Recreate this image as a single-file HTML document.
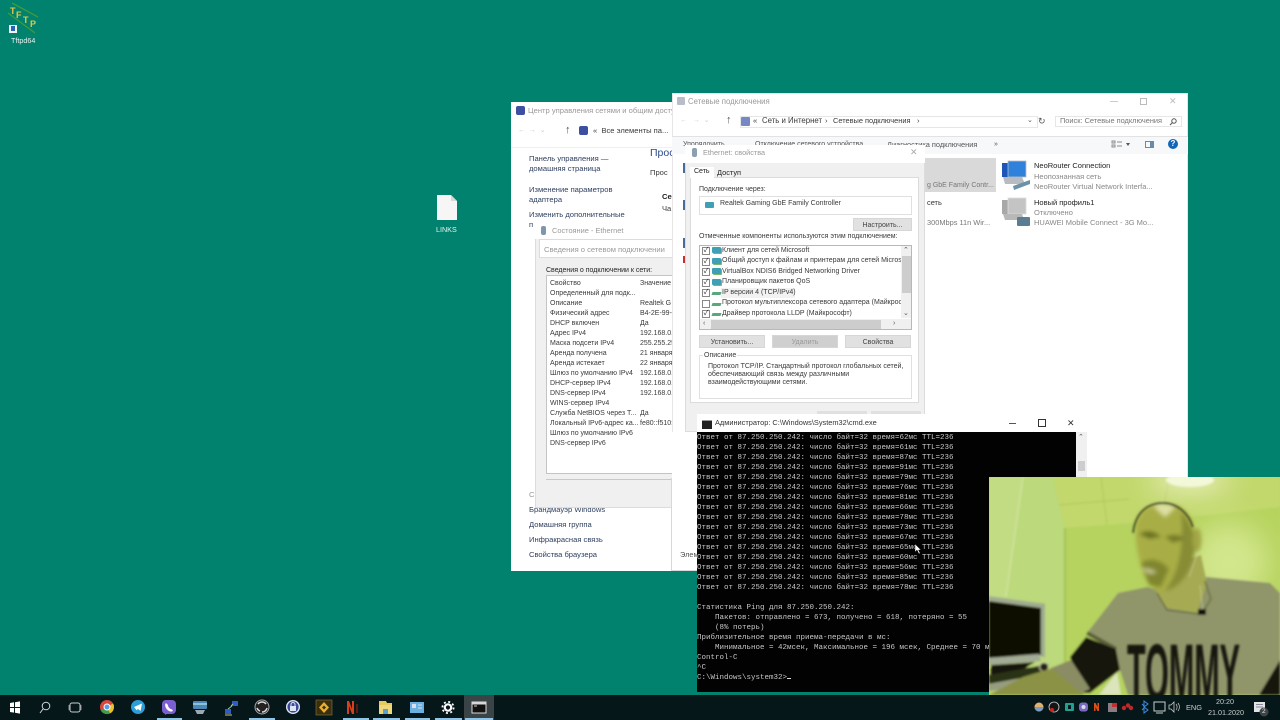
<!DOCTYPE html>
<html lang="ru"><head><meta charset="utf-8"><title>Desktop</title>
<style>
html,body{margin:0;padding:0;width:1280px;height:720px;overflow:hidden;background:#00826f}
body{font-family:"Liberation Sans","Noto Sans CJK SC",sans-serif;position:relative}
#w{position:absolute;left:0;top:0;width:1280px;height:720px;overflow:hidden;background:#00826f;filter:blur(.3px)}
.a,.t{position:absolute}
.t{white-space:nowrap;font-size:7px;line-height:10px;color:#3a3a3a;margin-top:1px}
.g{color:#8a8a8a}.l{color:#2f3f5f;font-size:7.6px}
.clip{overflow:hidden}
pre{margin:0;font-family:"Liberation Mono",monospace;font-size:7.5px;line-height:10px;color:#c8c8c8;position:absolute;left:697px;white-space:pre}
svg{position:absolute;overflow:visible}
.btn{position:absolute;background:#e1e1e1;border:1px solid #d6d6d6;box-sizing:border-box;text-align:center;font-size:7px;color:#444;line-height:13px}
.cb{position:absolute;left:702px;width:6px;height:6px;border:1px solid #888;background:#fff;color:#222;font-size:7px;line-height:6px;text-align:center}
.ni{position:absolute;left:712px;width:9px;height:6px;background:#3f9fb5;border-radius:1px;box-shadow:1px 1px 0 #79b86c}
.ng{position:absolute;left:712px;width:9px;height:3px;background:#5aa77e;margin-top:3px;transform:skewX(-20deg)}
.ul{position:absolute;top:718px;height:2px;background:#8fc6e8}
</style></head><body><div id="w">

<!-- desktop icons -->
<svg style="left:0;top:0" width="45" height="40" viewBox="0 0 45 40">
<path d="M12 3L38 17M8 13L35 33" stroke="#3f9a3a" stroke-width="1.4" fill="none"/>
</svg>
<div class="t" style="left:10px;top:5px;font-size:9px;font-weight:bold;color:#e5c743">T</div>
<div class="t" style="left:16px;top:9px;font-size:9px;font-weight:bold;color:#e5c743">F</div>
<div class="t" style="left:23px;top:14px;font-size:9px;font-weight:bold;color:#e5c743">T</div>
<div class="t" style="left:30px;top:18px;font-size:9px;font-weight:bold;color:#e5c743">P</div>
<div class="a" style="left:9px;top:25px;width:8px;height:8px;background:#f2f2f2"><div class="a" style="left:2px;top:1px;width:4px;height:5px;background:#2a62b4"></div></div>
<div class="t" style="left:11px;top:35px;color:#e8f2f0;font-size:7.2px">Tftpd64</div>
<svg style="left:437px;top:195px" width="20" height="25" viewBox="0 0 20 25"><path d="M0 0H14L20 6V25H0Z" fill="#f6f6f6"/><path d="M14 0V6H20" fill="#d8d8d8"/></svg>
<div class="t" style="left:436px;top:224px;color:#e8f2f0;font-size:7.2px">LINKS</div>

<!-- network centre window -->
<div class="a clip" style="left:511px;top:102px;width:170px;height:469px;background:#fff">
<div class="a" style="left:0;top:45px;width:170px;height:1px;background:#f0f0f0"></div>
</div>
<div class="a" style="left:516px;top:106px;width:9px;height:9px;background:#3d4fa0;border-radius:2px"></div>
<div class="t g" style="left:528px;top:105px;font-size:7.6px;color:#999">Центр управления сетями и общим досту</div>
<div class="t g" style="left:518px;top:125px;color:#c8c8c8">←&nbsp;&nbsp;→&nbsp;&nbsp;⌄</div>
<div class="t" style="left:565px;top:124px;font-size:11px;color:#555">↑</div>
<div class="a" style="left:579px;top:126px;width:9px;height:9px;background:#3d4fa0;border-radius:2px"></div>
<div class="t" style="left:593px;top:125px;font-size:7.6px">«&nbsp;&nbsp;Все элементы па...</div>
<div class="t l" style="left:529px;top:153px">Панель управления —</div>
<div class="t l" style="left:529px;top:163px">домашняя страница</div>
<div class="t l" style="left:529px;top:184px">Изменение параметров</div>
<div class="t l" style="left:529px;top:194px">адаптера</div>
<div class="t l" style="left:529px;top:209px">Изменить дополнительные</div>
<div class="t l" style="left:529px;top:219px">п</div>
<div class="t" style="left:650px;top:146px;font-size:10.5px;line-height:12px;color:#2b4a8a">Прос</div>
<div class="t" style="left:650px;top:167px;font-size:7.6px">Прос</div>
<div class="t" style="left:662px;top:191px;font-weight:bold;color:#222;font-size:7.6px">Се</div>
<div class="t" style="left:662px;top:203px;font-size:7.6px">Ча</div>
<div class="t g" style="left:529px;top:489px;color:#999;font-size:7.6px">См</div>
<div class="t l" style="left:529px;top:504px">Брандмауэр Windows</div>
<div class="t l" style="left:529px;top:519px">Домашняя группа</div>
<div class="t l" style="left:529px;top:534px">Инфракрасная связь</div>
<div class="t l" style="left:529px;top:549px">Свойства браузера</div>

<!-- status window -->
<div class="a" style="left:535px;top:222px;width:140px;height:286px;background:#f0f0f0;border:1px solid #dcdcdc;box-sizing:border-box"></div>
<div class="a" style="left:535px;top:222px;width:140px;height:17px;background:#fff"></div>
<div class="a" style="left:541px;top:226px;width:5px;height:9px;background:#7f97ad;border-radius:2px"></div>
<div class="t g" style="left:552px;top:225px;color:#999;font-size:7.4px">Состояние - Ethernet</div>
<div class="a" style="left:539px;top:239px;width:136px;height:19px;background:#fff;border:1px solid #dcdcdc;box-sizing:border-box"></div>
<div class="t g" style="left:544px;top:244px;color:#999;font-size:7.6px">Сведения о сетевом подключении</div>
<div class="t" style="left:546px;top:265px;color:#222">Сведения о подключении к сети:</div>
<div class="a" style="left:546px;top:275px;width:128px;height:199px;background:#fff;border:1px solid #c4c4c4;box-sizing:border-box"></div>
<div class="t" style="left:550px;top:278px">Свойство</div><div class="t" style="left:640px;top:278px">Значение</div>
<div class="t" style="left:550px;top:288px">Определенный для подк...</div>
<div class="t" style="left:550px;top:298px">Описание</div><div class="t" style="left:640px;top:298px">Realtek G</div>
<div class="t" style="left:550px;top:308px">Физический адрес</div><div class="t" style="left:640px;top:308px">B4-2E-99-</div>
<div class="t" style="left:550px;top:318px">DHCP включен</div><div class="t" style="left:640px;top:318px">Да</div>
<div class="t" style="left:550px;top:328px">Адрес IPv4</div><div class="t" style="left:640px;top:328px">192.168.0.1</div>
<div class="t" style="left:550px;top:338px">Маска подсети IPv4</div><div class="t" style="left:640px;top:338px">255.255.25</div>
<div class="t" style="left:550px;top:348px">Аренда получена</div><div class="t" style="left:640px;top:348px">21 января</div>
<div class="t" style="left:550px;top:358px">Аренда истекает</div><div class="t" style="left:640px;top:358px">22 января</div>
<div class="t" style="left:550px;top:368px">Шлюз по умолчанию IPv4</div><div class="t" style="left:640px;top:368px">192.168.0.1</div>
<div class="t" style="left:550px;top:378px">DHCP-сервер IPv4</div><div class="t" style="left:640px;top:378px">192.168.0.1</div>
<div class="t" style="left:550px;top:388px">DNS-сервер IPv4</div><div class="t" style="left:640px;top:388px">192.168.0.1</div>
<div class="t" style="left:550px;top:398px">WINS-сервер IPv4</div>
<div class="t" style="left:550px;top:408px">Служба NetBIOS через Т...</div><div class="t" style="left:640px;top:408px">Да</div>
<div class="t" style="left:550px;top:418px">Локальный IPv6-адрес ка...</div><div class="t" style="left:640px;top:418px">fe80::f510:</div>
<div class="t" style="left:550px;top:428px">Шлюз по умолчанию IPv6</div>
<div class="t" style="left:550px;top:438px">DNS-сервер IPv6</div>
<div class="a" style="left:546px;top:479px;width:126px;height:1px;background:#c8c8c8"></div>

<!-- connections window -->
<div class="a" style="left:672px;top:93px;width:516px;height:385px;background:#fff;border:1px solid #e6e6e6;box-sizing:border-box"></div>
<div class="a" style="left:672px;top:136px;width:516px;height:18px;background:#f6f8fa;border-top:1px solid #e2e2e2;box-sizing:border-box"></div>
<div class="a" style="left:677px;top:97px;width:8px;height:8px;background:#b8bdc8;border-radius:1px"></div>
<div class="t g" style="left:688px;top:96px;font-size:7.8px;color:#999">Сетевые подключения</div>
<div class="a" style="left:1110px;top:101px;width:8px;height:1px;background:#ccc"></div>
<div class="a" style="left:1140px;top:98px;width:5px;height:5px;border:1px solid #bbb"></div>
<div class="t" style="left:1169px;top:95px;font-size:9px;color:#bbb">✕</div>
<div class="t" style="left:680px;top:115px;color:#d0d0d0">←&nbsp;&nbsp;&nbsp;→&nbsp;&nbsp;⌄</div>
<div class="t" style="left:726px;top:114px;font-size:11px;color:#555">↑</div>
<div class="a" style="left:740px;top:116px;width:298px;height:12px;border:1px solid #e6e6e6;box-sizing:border-box"></div>
<div class="a" style="left:741px;top:117px;width:9px;height:9px;background:#7688c4;border-radius:1px"></div>
<div class="t" style="left:753px;top:115px;font-size:7.6px">«</div>
<div class="t" style="left:762px;top:115px;font-size:7.8px">Сеть и Интернет</div>
<div class="t" style="left:825px;top:115px;font-size:7.6px">›</div>
<div class="t" style="left:833px;top:115px;font-size:7.4px">Сетевые подключения</div>
<div class="t" style="left:917px;top:115px;font-size:7.6px">›</div>
<div class="t" style="left:1027px;top:115px;color:#555">⌄</div>
<div class="t" style="left:1038px;top:115px;color:#555;font-size:9px">↻</div>
<div class="a" style="left:1055px;top:116px;width:127px;height:11px;border:1px solid #e6e6e6;box-sizing:border-box"></div>
<div class="t" style="left:1060px;top:115px;color:#777;font-size:7.4px">Поиск: Сетевые подключения</div>
<svg style="left:1169px;top:118px" width="8" height="8" viewBox="0 0 8 8"><circle cx="5" cy="3" r="2.2" fill="none" stroke="#555"/><path d="M3.4 4.6L1 7" stroke="#555"/></svg>
<div class="t" style="left:683px;top:139px;color:#555">Упорядочить</div>
<div class="t" style="left:755px;top:139px;color:#555">Отключение сетевого устройства</div>
<div class="t" style="left:887px;top:139px;color:#555;font-size:7.4px">Диагностика подключения</div>
<div class="t" style="left:994px;top:139px;color:#555">»</div>
<svg style="left:1111px;top:140px" width="30" height="9" viewBox="0 0 30 9"><path d="M1 1h3v2H1zM1 5h3v2H1zM6 2h5M6 6h5" stroke="#8a8a8a" fill="none"/><path d="M15 3h4l-2 3z" fill="#555"/></svg>
<div class="a" style="left:1145px;top:141px;width:9px;height:7px;border:1px solid #6a8aaa;box-sizing:border-box;border-right:4px solid #6a8aaa"></div>
<div class="a" style="left:1168px;top:139px;width:10px;height:10px;border-radius:50%;background:#1266b5;color:#fff;font-size:8px;line-height:10px;text-align:center;font-weight:bold">?</div>
<div class="a" style="left:683px;top:163px;width:2px;height:10px;background:#4a6a9a"></div>
<div class="a" style="left:683px;top:200px;width:2px;height:10px;background:#4a6a9a"></div>
<div class="a" style="left:683px;top:238px;width:2px;height:10px;background:#4a6a9a"></div>
<div class="a" style="left:683px;top:256px;width:2px;height:7px;background:#c83030"></div>
<div class="a" style="left:925px;top:158px;width:71px;height:34px;background:#d9d9d9"></div>
<div class="t" style="left:927px;top:180px;color:#777">g GbE Family Contr...</div>
<div class="t" style="left:927px;top:197px;color:#333;font-size:7.4px">сеть</div>
<div class="t" style="left:927px;top:217px;color:#777;font-size:7.4px">300Mbps 11n Wir...</div>
<svg style="left:1000px;top:159px" width="32" height="70" viewBox="0 0 32 70">
<rect x="2" y="4" width="14" height="14" fill="#1e56b8"/><rect x="8" y="2" width="18" height="16" fill="#2e82dc" stroke="#b8bec8" stroke-width=".8"/>
<path d="M3 18h19l3 7H5z" fill="#b8bcc0"/><path d="M13 27l17-6v4l-16 6z" fill="#6d92a8"/>
<rect x="2" y="41" width="14" height="14" fill="#a8a8a8"/><rect x="8" y="39" width="18" height="16" fill="#c4c4c4" stroke="#ddd" stroke-width=".8"/>
<path d="M3 55h19l2 6H5z" fill="#b8b8b8"/><rect x="17" y="58" width="13" height="9" rx="1" fill="#5c7c94"/>
</svg>
<div class="t" style="left:1034px;top:160px;color:#222;font-size:7.5px">NeoRouter Connection</div>
<div class="t" style="left:1034px;top:171px;color:#888;font-size:7.5px">Неопознанная сеть</div>
<div class="t" style="left:1034px;top:181px;color:#888;font-size:7.5px">NeoRouter Virtual Network Interfa...</div>
<div class="t" style="left:1034px;top:197px;color:#222;font-size:7.5px">Новый профиль1</div>
<div class="t" style="left:1034px;top:207px;color:#888;font-size:7.5px">Отключено</div>
<div class="t" style="left:1034px;top:217px;color:#888;font-size:7.5px">HUAWEI Mobile Connect - 3G Mo...</div>

<!-- properties dialog -->
<div class="a" style="left:685px;top:145px;width:240px;height:287px;background:#f0f0f0;border:1px solid #dcdcdc;box-sizing:border-box"></div>
<div class="a" style="left:685px;top:145px;width:240px;height:18px;background:#fff"></div>
<div class="a" style="left:692px;top:148px;width:5px;height:9px;background:#8ba0b2;border-radius:2px"></div>
<div class="t g" style="left:703px;top:147px;color:#999;font-size:7.3px">Ethernet: свойства</div>
<div class="t" style="left:910px;top:146px;color:#aaa;font-size:9px">✕</div>
<div class="a" style="left:690px;top:177px;width:229px;height:226px;background:#fff;border:1px solid #dcdcdc;box-sizing:border-box"></div>
<div class="a" style="left:690px;top:167px;width:24px;height:11px;background:#fff"></div>
<div class="t" style="left:694px;top:166px;color:#222">Сеть</div>
<div class="t" style="left:717px;top:167px;color:#222;font-size:7.4px">Доступ</div>
<div class="t" style="left:699px;top:184px">Подключение через:</div>
<div class="a" style="left:699px;top:196px;width:213px;height:19px;border:1px solid #e0e0e0;box-sizing:border-box"></div>
<div class="a" style="left:705px;top:202px;width:9px;height:6px;background:#3f9fb5;border-radius:1px"></div>
<div class="t" style="left:720px;top:198px">Realtek Gaming GbE Family Controller</div>
<div class="btn" style="left:853px;top:218px;width:59px;height:13px">Настроить...</div>
<div class="t" style="left:699px;top:231px">Отмеченные компоненты используются этим подключением:</div>
<div class="a" style="left:699px;top:245px;width:213px;height:85px;border:1px solid #b8b8b8;box-sizing:border-box;background:#fff"></div>
<div class="cb" style="top:247px">✓</div><div class="ni" style="top:247px"></div><div class="t" style="left:722px;top:245px">Клиент для сетей Microsoft</div>
<div class="cb" style="top:258px">✓</div><div class="ni" style="top:258px"></div><div class="t clip" style="left:722px;top:255px;width:179px">Общий доступ к файлам и принтерам для сетей Microsoft</div>
<div class="cb" style="top:268px">✓</div><div class="ni" style="top:268px"></div><div class="t" style="left:722px;top:266px">VirtualBox NDIS6 Bridged Networking Driver</div>
<div class="cb" style="top:279px">✓</div><div class="ni" style="top:279px"></div><div class="t" style="left:722px;top:276px">Планировщик пакетов QoS</div>
<div class="a" style="left:721px;top:288px;width:74px;height:10px;background:#f2f2f2"></div>
<div class="cb" style="top:289px">✓</div><div class="ng" style="top:289px"></div><div class="t" style="left:722px;top:287px">IP версии 4 (TCP/IPv4)</div>
<div class="cb" style="top:300px"></div><div class="ng" style="top:300px"></div><div class="t clip" style="left:722px;top:297px;width:179px">Протокол мультиплексора сетевого адаптера (Майкрософт)</div>
<div class="cb" style="top:310px">✓</div><div class="ng" style="top:310px"></div><div class="t" style="left:722px;top:308px">Драйвер протокола LLDP (Майкрософт)</div>
<div class="a" style="left:901px;top:246px;width:10px;height:72px;background:#f0f0f0"></div>
<div class="a" style="left:902px;top:256px;width:9px;height:37px;background:#cdcdcd"></div>
<div class="t" style="left:903px;top:245px;color:#555;font-size:7px">⌃</div>
<div class="t" style="left:903px;top:308px;color:#555;font-size:7px">⌄</div>
<div class="a" style="left:700px;top:319px;width:211px;height:10px;background:#f0f0f0"></div>
<div class="a" style="left:711px;top:320px;width:170px;height:9px;background:#cdcdcd"></div>
<div class="t" style="left:703px;top:318px;color:#555">‹</div><div class="t" style="left:893px;top:318px;color:#555">›</div>
<div class="btn" style="left:699px;top:335px;width:66px;height:13px">Установить...</div>
<div class="btn" style="left:772px;top:335px;width:66px;height:13px;background:#cfcfcf;color:#999">Удалить</div>
<div class="btn" style="left:845px;top:335px;width:66px;height:13px">Свойства</div>
<div class="a" style="left:699px;top:355px;width:213px;height:44px;border:1px solid #e0e0e0;box-sizing:border-box"></div>
<div class="t" style="left:703px;top:350px;background:#fff;padding:0 1px">Описание</div>
<div class="t" style="left:708px;top:361px">Протокол TCP/IP. Стандартный протокол глобальных сетей,</div>
<div class="t" style="left:708px;top:369px">обеспечивающий связь между различными</div>
<div class="t" style="left:708px;top:377px">взаимодействующими сетями.</div>
<div class="a" style="left:817px;top:411px;width:50px;height:4px;background:#e0e0e0"></div>
<div class="a" style="left:871px;top:411px;width:50px;height:4px;background:#e0e0e0"></div>
<div class="a" style="left:672px;top:432px;width:25px;height:139px;background:#fff"></div>
<div class="a" style="left:671px;top:478px;width:1px;height:93px;background:#d8d8d8"></div>
<div class="a" style="left:672px;top:570px;width:25px;height:1px;background:#d8d8d8"></div>
<div class="a" style="left:672px;top:478px;width:25px;height:92px;background:#fff"></div>
<div class="t" style="left:680px;top:549px;color:#555;font-size:7.4px">Элем</div>

<!-- cmd window -->
<div class="a" style="left:697px;top:414px;width:390px;height:18px;background:#fff"></div>
<div class="a" style="left:702px;top:420px;width:10px;height:8px;background:#222;border-top:1px solid #999"></div>
<div class="t" style="left:715px;top:417px;color:#333;font-size:7.4px">Администратор: C:\Windows\System32\cmd.exe</div>
<div class="a" style="left:1009px;top:423px;width:7px;height:1px;background:#555"></div>
<div class="a" style="left:1038px;top:419px;width:6px;height:6px;border:1px solid #333"></div>
<div class="t" style="left:1067px;top:417px;color:#333;font-size:9px">✕</div>
<div class="a" style="left:697px;top:432px;width:379px;height:260px;background:#020202"></div>
<div class="a" style="left:1076px;top:432px;width:11px;height:45px;background:#f0f0f0"></div>
<div class="a" style="left:1078px;top:461px;width:7px;height:10px;background:#cdcdcd"></div>
<div class="t" style="left:1078px;top:432px;color:#555;font-size:7px">⌃</div>
<pre style="top:433px">Ответ от 87.250.250.242: число байт=32 время=62мс TTL=236
Ответ от 87.250.250.242: число байт=32 время=61мс TTL=236
Ответ от 87.250.250.242: число байт=32 время=87мс TTL=236
Ответ от 87.250.250.242: число байт=32 время=91мс TTL=236
Ответ от 87.250.250.242: число байт=32 время=79мс TTL=236
Ответ от 87.250.250.242: число байт=32 время=76мс TTL=236
Ответ от 87.250.250.242: число байт=32 время=81мс TTL=236
Ответ от 87.250.250.242: число байт=32 время=66мс TTL=236
Ответ от 87.250.250.242: число байт=32 время=78мс TTL=236
Ответ от 87.250.250.242: число байт=32 время=73мс TTL=236
Ответ от 87.250.250.242: число байт=32 время=67мс TTL=236
Ответ от 87.250.250.242: число байт=32 время=65мс TTL=236
Ответ от 87.250.250.242: число байт=32 время=60мс TTL=236
Ответ от 87.250.250.242: число байт=32 время=56мс TTL=236
Ответ от 87.250.250.242: число байт=32 время=85мс TTL=236
Ответ от 87.250.250.242: число байт=32 время=78мс TTL=236

Статистика Ping для 87.250.250.242:
    Пакетов: отправлено = 673, получено = 618, потеряно = 55
    (8% потерь)
Приблизительное время приема-передачи в мс:
    Минимальное = 42мсек, Максимальное = 196 мсек, Среднее = 70 м
Control-C
^C
C:\Windows\system32&gt;<span style="display:inline-block;width:4px;height:1px;background:#ddd"></span></pre>
<svg style="left:915px;top:544px" width="7" height="10" viewBox="0 0 7 10"><path d="M0 0V8L2 6L4 10L5 9L3.5 6H6Z" fill="#fff" stroke="#000" stroke-width=".4"/></svg>

<!-- webcam -->
<svg style="left:989px;top:477px;overflow:hidden" width="291" height="218" viewBox="0 0 291 218">
<defs><filter id="b" x="-5%" y="-5%" width="110%" height="110%"><feGaussianBlur stdDeviation="1"/></filter>
<filter id="b3" x="-20%" y="-20%" width="140%" height="140%"><feGaussianBlur stdDeviation="1.8"/></filter>
<filter id="b2" x="-80%" y="-80%" width="260%" height="260%"><feGaussianBlur stdDeviation="14"/></filter></defs>
<rect width="291" height="218" fill="#b9d566"/>
<g filter="url(#b)">
<path d="M0 0H64L76 51V190H0Z" fill="#bcd97c"/>
<path d="M0 0H34L17 120H0Z" fill="#c2dc84"/>
<path d="M34 0L17 120" stroke="#d8e8a8" stroke-width="1" fill="none"/>
<path d="M64 0H291V30L215 40L144 46L76 51Z" fill="#c2d86c"/>
<path d="M70 28L140 22M112 0L118 48M180 0L175 30" stroke="#a8c058" stroke-width=".7" fill="none"/>
<path d="M76 51L144 46L291 30V218H76Z" fill="#b6d35e"/>
<path d="M76 51V190" stroke="#a4c254" stroke-width="2"/>
<ellipse cx="240" cy="85" rx="40" ry="40" fill="#d2e68c" filter="url(#b2)"/>
<ellipse cx="201" cy="2" rx="40" ry="14" fill="#e8f0c0" filter="url(#b2)"/>
<ellipse cx="201" cy="3" rx="24" ry="7" fill="#f3f8d8"/>
<path d="M0 120L56 127L54 178L0 181Z" fill="#0a0a06"/>
<path d="M0 119L56 127L56 180H52V131L0 124Z" fill="#a0ac90"/>
<path d="M0 181L50 177L52 184L0 188Z" fill="#a3ac94"/>
<path d="M2 188L46 185L28 196L2 198Z" fill="#14140a"/>
<path d="M0 198L60 187L55 197L0 207Z" fill="#2c3018"/>
<path d="M0 207L40 200L36 210L0 214Z" fill="#969c80"/>
<circle cx="55" cy="190" r="4.500" fill="#20200f" stroke="#c8ccb0" stroke-width="1"/>
<path d="M98 156L129 116L158 110L178 115L218 100L281 106L291 116V218H139L131 193L127 172Z" fill="#90956a"/>
<path d="M270 218L291 183V218Z" fill="#15160c"/>
<path d="M98 156L127 172" stroke="#5c5e38" stroke-width="4" fill="none"/>
<path d="M81 180L97 160L127 172L131 193L101 216H95Z" fill="#15160c"/>
<path d="M0 218L34 200L64 191L91 206L95 218Z" fill="#8c9244"/>
<path d="M62 191L82 183L101 212L92 216Z" fill="#8a8c64"/>
<path d="M158 96L168 116L178 131L208 136L218 106L212 78Z" fill="#a6aa52"/>
<path d="M168 116L178 133L210 137" stroke="#6c7040" stroke-width="1.5" fill="none"/>
<path d="M216 104L222 122L212 138" stroke="#767a4c" stroke-width="2" fill="none"/>
<g filter="url(#b3)">
<path d="M147 48C150 30 168 25 182 27C198 29 206 44 206 66C206 88 194 110 174 114C163 114 156 104 153 92C148 76 146 62 147 48Z" fill="#a9ad45"/>
<path d="M192 35C200 44 206 55 206 68C206 88 194 110 176 114C186 100 196 80 192 35Z" fill="#878c34"/>
<path d="M152 86C160 80 172 82 180 92L172 110L160 108Z" fill="#80862f"/>
<path d="M152 92C158 90 164 92 168 96L160 97Z" fill="#c0c288"/>
<path d="M150 57C158 52 166 54 172 60L160 62Z" fill="#6c7220"/>
<path d="M176 60C184 56 192 58 196 62L184 66Z" fill="#747a28"/>
<path d="M165 30C170 26 180 26 186 31L176 40Z" fill="#dbe0a0"/>
<ellipse cx="208" cy="63" rx="4.500" ry="12" fill="#a2a644"/>
</g>
<path d="M144 56C146 36 158 26 174 26C188 26 200 36 204 50" fill="none" stroke="#1e2014" stroke-width="2"/>
<path d="M209 75L200 100M211 108L214 135" stroke="#d0d4a0" stroke-width=".6" fill="none"/>
<rect x="209" y="132" width="8" height="6" fill="#111"/>
<path d="M110 218L128 195L132 218Z" fill="#dce4bc"/>
</g>
<text x="138" y="224" font-family="Liberation Sans,sans-serif" font-size="82" font-weight="bold" fill="#15160c" textLength="113" lengthAdjust="spacingAndGlyphs" filter="url(#b)">TOMMY</text>
</svg>

<!-- taskbar -->
<div class="a" style="left:0;top:695px;width:1280px;height:25px;background:#06171a"></div>
<div class="a" style="left:464px;top:695px;width:30px;height:25px;background:#3a4446"></div>
<div class="ul" style="left:157px;width:25px"></div><div class="ul" style="left:249px;width:26px"></div><div class="ul" style="left:343px;width:26px"></div><div class="ul" style="left:373px;width:27px"></div><div class="ul" style="left:405px;width:25px"></div><div class="ul" style="left:435px;width:27px"></div><div class="ul" style="left:465px;width:28px"></div>
<svg style="left:0;top:695px" width="500" height="25" viewBox="0 0 500 25">
<path d="M10 8L14 7.3V12H10ZM15 7.2L20 6.4V12H15ZM10 13H14V17.6L10 17ZM15 13H20V18.6L15 17.8Z" fill="#fff"/>
<circle cx="46" cy="11" r="3.8" fill="none" stroke="#cfd4d4"/><path d="M43 14L40 18" stroke="#cfd4d4"/>
<rect x="70" y="8" width="10" height="9" rx="2" fill="none" stroke="#c8cccc"/><path d="M69 10v5M81 10v5" stroke="#888"/>
<circle cx="107" cy="12" r="7" fill="#d8473c"/><path d="M107 12L100.6 15A7 7 0 0 0 110 18.4Z" fill="#3aa04a"/><path d="M107 12L110 18.4A7 7 0 0 0 113 8.5Z" fill="#e8c22e"/><circle cx="107" cy="12" r="3" fill="#5a9be6" stroke="#fff"/>
<circle cx="138" cy="12" r="7" fill="#2c9fd8"/><path d="M134 12L142 8.5L140.6 16L138 14L136.6 15.2Z" fill="#fff"/>
<rect x="162" y="5" width="14" height="14" rx="4" fill="#7b5fd0"/><path d="M165.5 8.5C167 8 168 10 168 11C169 13 170 14 172 14.5C173 15 173 16 172 16.5C168 17 164 12 165.5 8.5Z" fill="#fff"/><path d="M165 20l3-2h-3z" fill="#7b5fd0"/>
<rect x="193" y="6" width="14" height="8" rx="1" fill="#4a86b8"/><path d="M193 9h14" stroke="#cfe" /><path d="M195 15h10l-2 4h-6z" fill="#9ca8b0"/>
<rect x="232" y="6" width="6" height="5" fill="#2e5cc8"/><rect x="225" y="14" width="6" height="5" fill="#2e5cc8"/><path d="M231 11L233 9M228 14L232 11" stroke="#9c9" /><path d="M225 20h7" stroke="#d0c060"/>
<circle cx="262" cy="12" r="7" fill="#222" stroke="#aaa"/><path d="M258 9A5 5 0 0 1 266 9M267 13A5 5 0 0 1 262 17M257 13A5 5 0 0 0 260 16" stroke="#ddd" fill="none" stroke-width="1.5"/>
<circle cx="293" cy="12" r="7" fill="#dfe4f4"/><circle cx="293" cy="12" r="5.6" fill="#3a4a9a"/><rect x="290" y="11" width="6" height="5" fill="#dfe4f4"/><path d="M291 11V9.5a2 2 0 0 1 4 0V11" fill="none" stroke="#dfe4f4"/>
<rect x="316" y="5" width="16" height="15" fill="#3b2f10" stroke="#8a7a3a" stroke-width=".6"/><path d="M324 7L329 12.5L324 18L319 12.5Z" fill="#e8b030"/><path d="M324 10.5L326 12.5L324 14.5L322 12.5Z" fill="#3b2f10"/>
<path d="M347 6h2l3 8V6h2v13h-2l-3-8v8h-2z" fill="#d8401c"/><path d="M356 9h2v9h-2z" fill="#5a1a10"/>
<path d="M379 6h7l1 2h5v11h-13z" fill="#e8c860"/><rect x="379" y="10" width="13" height="9" fill="#f0d878"/><rect x="383" y="14" width="5" height="5" fill="#5aa0d0"/>
<rect x="410" y="7" width="14" height="11" fill="#6ab0e0"/><rect x="412" y="9" width="4" height="4" fill="#dde"/><path d="M418 10h4M418 13h4" stroke="#dde"/>
<circle cx="448" cy="12.5" r="3.2" fill="none" stroke="#fff" stroke-width="2.2"/><circle cx="448" cy="12.5" r="5.6" fill="none" stroke="#fff" stroke-width="1.8" stroke-dasharray="2 2.4"/>
<rect x="472" y="7" width="14" height="11" fill="#111" stroke="#d8d8d8"/><path d="M472 8.5h14" stroke="#d8d8d8" stroke-width="2"/><path d="M474 11h3" stroke="#ccc"/>
</svg>
<svg style="left:1030px;top:695px" width="250" height="25" viewBox="0 0 250 25">
<circle cx="9" cy="12" r="4.5" fill="#e0b070"/><path d="M4.5 12a4.5 4.5 0 0 0 9 0z" fill="#7a9cc0"/>
<circle cx="24" cy="12" r="5" fill="#151515" stroke="#ccc" stroke-width=".8"/><circle cx="22" cy="15" r="2" fill="#d02020"/>
<rect x="35" y="8" width="9" height="8" rx="1" fill="#20a090"/><rect x="38" y="10" width="3" height="4" fill="#06171a"/>
<rect x="49" y="7.5" width="9" height="9" rx="3" fill="#7b6bc0"/><circle cx="53.5" cy="12" r="2" fill="#dcd8f0"/>
<path d="M64 8h1.500l2 4V8H69V16H67.500l-2-4V16H64Z" fill="#d8501c"/>
<rect x="78" y="8" width="9" height="9" fill="#8a7c80"/><rect x="82" y="8" width="5" height="4" fill="#c03030"/>
<circle cx="94" cy="13" r="2.200" fill="#c02828"/><circle cx="98" cy="10.500" r="2.200" fill="#c02828"/><circle cx="101" cy="13" r="2.200" fill="#c02828"/>
<path d="M114 8L118 11L114 14V8ZM114 14L118 17L114 20ZM112 11L114 13M112 17L114 15" fill="none" stroke="#3c8ce0" transform="translate(0 -2)"/>
<rect x="124" y="7" width="11" height="9" fill="none" stroke="#c8cccc"/><path d="M126 18h7" stroke="#c8cccc"/>
<path d="M139 10h2l3-3v10l-3-3h-2z" fill="none" stroke="#c8cccc" stroke-width=".8"/><path d="M146 9c1.500 2 1.500 4 0 6M148 8c2 3 2 5 0 8" fill="none" stroke="#c8cccc" stroke-width=".7"/>
<rect x="224" y="7" width="11" height="10" fill="#e0e4e4"/><path d="M226 9.500h7M226 12h7" stroke="#889"/>
<circle cx="234" cy="17" r="4.500" fill="#3c4446"/>
</svg>
<div class="t" style="left:1186px;top:702px;color:#c8cccc;font-size:7.4px">ENG</div>
<div class="t" style="left:1216px;top:696px;color:#c8cccc;font-size:7.2px">20:20</div>
<div class="t" style="left:1208px;top:707px;color:#c8cccc;font-size:7.2px">21.01.2020</div>
<div class="t" style="left:1262px;top:706px;color:#e8e8e8;font-size:6.5px">2</div>
</div></body></html>
